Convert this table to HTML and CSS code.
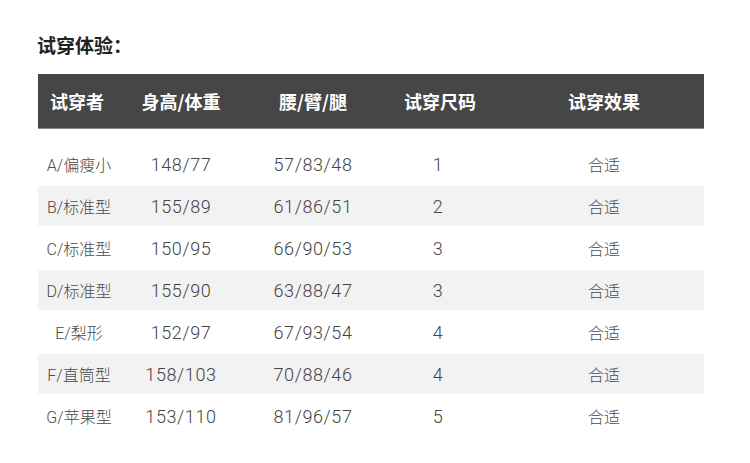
FILE: index.html
```html
<!DOCTYPE html>
<html lang="zh-CN">
<head>
<meta charset="utf-8">
<title>试穿体验</title>
<link rel="stylesheet" href="styles.css">
</head>
<body>
<div class="page">
  <h2 class="title">试穿体验：</h2>
  <div class="table">
    <div class="row head">
      <div class="cell">试穿者</div>
      <div class="cell">身高/体重</div>
      <div class="cell">腰/臂/腿</div>
      <div class="cell">试穿尺码</div>
      <div class="cell last">试穿效果</div>
    </div>
    <div class="body">
      <div class="row"><div class="cell name">A/偏瘦小</div><div class="cell num">148/77</div><div class="cell num">57/83/48</div><div class="cell num">1</div><div class="cell last fit">合适</div></div>
      <div class="row"><div class="cell name">B/标准型</div><div class="cell num">155/89</div><div class="cell num">61/86/51</div><div class="cell num">2</div><div class="cell last fit">合适</div></div>
      <div class="row"><div class="cell name">C/标准型</div><div class="cell num">150/95</div><div class="cell num">66/90/53</div><div class="cell num">3</div><div class="cell last fit">合适</div></div>
      <div class="row"><div class="cell name">D/标准型</div><div class="cell num">155/90</div><div class="cell num">63/88/47</div><div class="cell num">3</div><div class="cell last fit">合适</div></div>
      <div class="row"><div class="cell name">E/梨形</div><div class="cell num">152/97</div><div class="cell num">67/93/54</div><div class="cell num">4</div><div class="cell last fit">合适</div></div>
      <div class="row"><div class="cell name">F/直筒型</div><div class="cell num">158/103</div><div class="cell num">70/88/46</div><div class="cell num">4</div><div class="cell last fit">合适</div></div>
      <div class="row"><div class="cell name">G/苹果型</div><div class="cell num">153/110</div><div class="cell num">81/96/57</div><div class="cell num">5</div><div class="cell last fit">合适</div></div>
    </div>
  </div>
</div>
</body>
</html>
```
FILE: styles.css
```css
* { box-sizing: border-box; }
html, body { margin: 0; padding: 0; background: #fff; }
body {
  font-family: "Noto Sans CJK SC", "Noto Sans", sans-serif;
  color: #4a4a4a;
}
.page {
  padding: 32px 0 0 38px;
}
.title {
  margin: 0 0 0 -1px;
  font-size: 19px;
  line-height: 26px;
  font-weight: 700;
  color: #222;
}
.table {
  width: 666px;
  margin-top: 16px;
}
.row {
  display: grid;
  grid-template-columns: 82px 122px 142px 108px 1fr;
  align-items: center;
}
.cell { text-align: center; white-space: nowrap; }
.cell.last { padding-left: 12px; }
.head {
  height: 55px;
  background: #464646;
  border-bottom: 1px solid #8a8a8a;
  color: #fff;
  font-size: 18px;
  font-weight: 700;
}
.head .cell:first-child { padding-right: 4px; }
.head .cell:nth-child(4) { padding-left: 4px; }
.body { padding-top: 13px; }
.body .row { height: 44px; }
.body .row:nth-child(even) { height: 40px; background: #f2f2f2; }
.name {
  font-family: "Roboto", "Noto Sans CJK SC", sans-serif;
  font-weight: 300;
  font-size: 16px;
  color: #4a4a4a;
}
.num {
  font-family: "Roboto", "Noto Sans CJK SC", sans-serif;
  font-weight: 300;
  font-size: 18px;
  letter-spacing: 0.6px;
  color: #444;
}
.fit {
  font-weight: 300;
  font-size: 16px;
  color: #4a4a4a;
}
```
